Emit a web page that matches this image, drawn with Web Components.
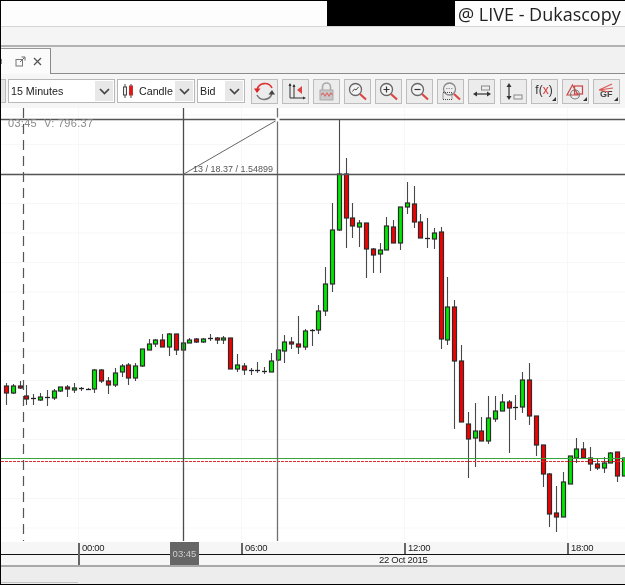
<!DOCTYPE html>
<html>
<head>
<meta charset="utf-8">
<title>Dukascopy chart</title>
<style>
  html, body { margin: 0; padding: 0; background: #fff; }
  body { width: 625px; height: 585px; overflow: hidden; font-family: "Liberation Sans", sans-serif; }
</style>
</head>
<body>
<trader-app>
  <title-bar slot="title">@ LIVE - Dukascopy</title-bar>
  <tab-strip slot="tabs"></tab-strip>
  <chart-toolbar slot="toolbar">
    <tool-select style="width:107px">15 Minutes</tool-select>
    <tool-select style="width:78px;margin-left:2px" candle>Candle</tool-select>
    <tool-select style="width:48px;margin-left:2px">Bid</tool-select>

    <tool-button style="margin-left:6px">
      <svg viewBox="0 0 27 25" width="27" height="25" fill="none">
        <path d="M6 11 A8 8 0 0 1 21 9" stroke="#d33" stroke-width="1.6"/>
        <path d="M3 9.500 L9.500 9.500 L6 14 Z" fill="#d22"/>
        <path d="M21 14 A8 8 0 0 1 6 16" stroke="#777" stroke-width="1.6"/>
        <path d="M17.500 15.500 L24 15.500 L21 11 Z" fill="#444"/>
      </svg>
    </tool-button>
    <tool-button>
      <svg viewBox="0 0 27 25" width="27" height="25" fill="none">
        <path d="M8 5V19H22M12 6V19" stroke="#333" stroke-width="1"/>
        <path d="M6.500 7L8 4L9.500 7ZM10.500 8L12 5L13.500 8ZM21 17.500L24 19L21 20.500Z" fill="#333"/>
        <path d="M20 7V15L15 11Z" fill="#d44"/>
      </svg>
    </tool-button>
    <tool-button>
      <svg viewBox="0 0 27 25" width="27" height="25" fill="none">
        <path d="M9.500 11V8A4 4 0 0 1 17.500 8V11" stroke="#aaa" stroke-width="1.6"/>
        <rect x="7" y="11" width="13" height="10" fill="#c8c8c8" stroke="#aaa"/>
        <path d="M8 16L10 14L12 17L14 14L16 17L18 14L19.500 16" stroke="#d66" stroke-width="1.1"/>
      </svg>
    </tool-button>
    <tool-button>
      <svg viewBox="0 0 27 25" width="27" height="25" fill="none">
        <circle cx="11.500" cy="10.500" r="6" fill="#f4f4f4" stroke="#666" stroke-width="1.3"/>
        <path d="M8.500 12.500L10.500 10L12 11L14.500 8" stroke="#444"/>
        <path d="M16 15L22 20.500" stroke="#d44" stroke-width="2.200"/>
      </svg>
    </tool-button>
    <tool-button>
      <svg viewBox="0 0 27 25" width="27" height="25" fill="none">
        <circle cx="11.500" cy="10.500" r="6" fill="#f4f4f4" stroke="#666" stroke-width="1.3"/>
        <path d="M8.500 10.500H14.500M11.500 7.500V13.500" stroke="#333" stroke-width="1.200"/>
        <path d="M16 15L22 20.500" stroke="#d44" stroke-width="2.200"/>
      </svg>
    </tool-button>
    <tool-button>
      <svg viewBox="0 0 27 25" width="27" height="25" fill="none">
        <circle cx="11.500" cy="10.500" r="6" fill="#f4f4f4" stroke="#666" stroke-width="1.3"/>
        <path d="M8.500 10.500H14.500" stroke="#333" stroke-width="1.200"/>
        <path d="M16 15L22 20.500" stroke="#d44" stroke-width="2.200"/>
      </svg>
    </tool-button>
    <tool-button>
      <svg viewBox="0 0 27 25" width="27" height="25" fill="none">
        <circle cx="12.500" cy="10" r="6" fill="#eee" stroke="#888" stroke-width="1.3"/>
        <path d="M9 9.500H16" stroke="#999" stroke-dasharray="1.500 1"/>
        <rect x="6" y="13.500" width="9" height="7" stroke="#444" stroke-dasharray="1 1"/>
        <path d="M17 15L23 20.500" stroke="#d44" stroke-width="2.200"/>
      </svg>
    </tool-button>
    <tool-button>
      <svg viewBox="0 0 27 25" width="27" height="25" fill="none">
        <rect x="13.500" y="7" width="8" height="4" fill="#eee" stroke="#888"/>
        <path d="M7 15H21" stroke="#333" stroke-width="1.200"/>
        <path d="M9 12.500V17.500L5 15ZM19 12.500V17.500L23 15Z" fill="#333"/>
      </svg>
    </tool-button>
    <tool-button style="margin-left:1px">
      <svg viewBox="0 0 27 25" width="27" height="25" fill="none">
        <rect x="14" y="16" width="8" height="4" fill="#eee" stroke="#888"/>
        <path d="M9 7V18" stroke="#333" stroke-width="1.200"/>
        <path d="M6.500 8H11.500L9 4ZM6.500 17H11.500L9 21Z" fill="#333"/>
      </svg>
    </tool-button>
    <tool-button>
      <svg viewBox="0 0 27 25" width="27" height="25" fill="none">
        <path d="M25 18V22H21Z" fill="#333"/>
      </svg>
      <span style="font:12px 'Liberation Sans',sans-serif;color:#333;margin:-4px 0 0 -1px;position:relative">f(<b style="color:#d33;font-weight:400">x</b>)</span>
    </tool-button>
    <tool-button>
      <svg viewBox="0 0 27 25" width="27" height="25" fill="none">
        <path d="M10.500 6L16 16H5Z" stroke="#c44" stroke-width="1.200"/>
        <rect x="12.500" y="7" width="8" height="8" stroke="#c44" stroke-width="1.200"/>
        <circle cx="13" cy="15.500" r="4.500" stroke="#777" stroke-width="1.100"/>
        <path d="M25 18V22H21Z" fill="#333"/>
      </svg>
    </tool-button>
    <tool-button>
      <span style="position:absolute;left:6px;bottom:4px;font:bold 9px 'Liberation Sans',sans-serif;color:#444">GF</span>
      <svg viewBox="0 0 27 25" width="27" height="25" fill="none">
        <path d="M6 11L19 5M6 11L20 9M6 11L16 13" stroke="#d55" stroke-width="1.100"/>
        <path d="M25 18V22H21Z" fill="#333"/>
      </svg>
    </tool-button>
  </chart-toolbar>
  <candle-chart slot="chart"></candle-chart>
  <time-axis slot="axis"></time-axis>
  <status-strip slot="status"></status-strip>
</trader-app>

<script>
class TraderApp extends HTMLElement {
  constructor() {
    super();
    const shadow = this.attachShadow({ mode: 'open' });
    shadow.innerHTML = `
      <style>
        :host {
          display: flex;
          flex-direction: column;
          box-sizing: border-box;
          width: 625px;
          height: 585px;
          overflow: hidden;
          border-left: 1px solid #000;
          border-top: 1px solid #000;
          border-bottom: 1px solid #000;
          filter: blur(.3px);
        }
      </style>
      <slot name="title"></slot>
      <slot name="tabs"></slot>
      <slot name="toolbar"></slot>
      <slot name="chart"></slot>
      <slot name="axis"></slot>
      <slot name="status"></slot>
    `;
  }
}

class TitleBar extends HTMLElement {
  constructor() {
    super();
    const shadow = this.attachShadow({ mode: 'open' });
    shadow.innerHTML = `
      <style>
        :host {
          display: flex;
          justify-content: flex-end;
          align-items: stretch;
          height: 25px;
          background: #fdfdfd;
          font-family: "Open Sans", sans-serif;
          font-size: 18px;
          color: #222;
        }
        .hidden { width: 128px; background: #000; }
        .name { display: flex; align-items: center; width: 170px; padding-left: 3px; box-sizing: border-box; white-space: nowrap; }
      </style>
      <div class="hidden"></div>
      <div class="name"><slot></slot></div>
    `;
  }
}

class TabStrip extends HTMLElement {
  constructor() {
    super();
    const shadow = this.attachShadow({ mode: 'open' });
    shadow.innerHTML = `
      <style>
        :host { display: block; }
        .menu {
          height: 18px;
          background: #f5f5f5;
          border-top: 1px solid #d6d6d6;
          border-bottom: 2px solid #b2b2b2;
        }
        .row {
          display: flex;
          height: 27px;
          box-sizing: border-box;
          background: #f1f1f1;
          border-bottom: 1px solid #8c8c8c;
          padding-top: 1px;
        }
        .tab {
          display: flex;
          align-items: center;
          gap: 7px;
          width: 50px;
          height: 26px;
          box-sizing: border-box;
          padding-left: 14px;
          background: #fbfbfb;
          border-top: 1px solid #999;
          border-right: 1px solid #888;
          position: relative;
        }
        .cut { position: absolute; left: 0; top: 10px; width: 1px; height: 5px; background: #888; }
        svg { display: block; }
      </style>
      <div class="menu"></div>
      <div class="row">
        <div class="tab">
          <div class="cut"></div>
          <svg width="11" height="11" viewBox="0 0 11 11" fill="none">
            <rect x="1" y="3.500" width="6.500" height="6.500" stroke="#777"/>
            <path d="M5 6L9.500 1.500M6.500 1H10V4.500" stroke="#666"/>
          </svg>
          <svg width="9" height="9" viewBox="0 0 9 9" fill="none">
            <path d="M1 1L8 8M8 1L1 8" stroke="#555" stroke-width="1.300"/>
          </svg>
        </div>
      </div>
    `;
  }
}

class ChartToolbar extends HTMLElement {
  constructor() {
    super();
    const shadow = this.attachShadow({ mode: 'open' });
    shadow.innerHTML = `
      <style>
        :host {
          display: flex;
          align-items: flex-start;
          gap: 4px;
          height: 34px;
          box-sizing: border-box;
          padding: 5px 0 0 7px;
          background: #f6f6f6;
          position: relative;
        }
        .edge {
          width: 4px;
          height: 22px;
          margin-left: -7px;
          margin-right: -2px;
          background: #e4e4e4;
          border: 1px solid #bbb;
          border-left: 0;
        }
        ::slotted(tool-select) { margin-right: -4px; }
      </style>
      <div class="edge"></div>
      <slot></slot>
    `;
  }
}

class ToolSelect extends HTMLElement {
  constructor() {
    super();
    const shadow = this.attachShadow({ mode: 'open' });
    const icon = this.hasAttribute('candle') ? `
      <svg width="14" height="16" viewBox="0 0 14 16" fill="none" style="margin:0 3px 0 2px;flex:none">
        <path d="M3 1V15" stroke="#444"/><rect x="1.500" y="4" width="3" height="8" fill="#eee" stroke="#444"/>
        <path d="M9 1V15" stroke="#444"/><rect x="7.500" y="3" width="3" height="9" fill="#e11" stroke="#b33"/>
      </svg>` : '';
    shadow.innerHTML = `
      <style>
        :host {
          display: flex;
          height: 24px;
          box-sizing: border-box;
          border: 1px solid #b8b8b8;
          background: #fff;
          padding: 1px;
          font: 10.700px "Liberation Sans", sans-serif;
          color: #222;
        }
        .value {
          flex: 1;
          display: flex;
          align-items: center;
          padding-left: 1px;
          overflow: hidden;
          white-space: nowrap;
        }
        .arrow {
          flex: none;
          width: 18px;
          display: flex;
          align-items: center;
          justify-content: center;
          background: #e8e8e8;
        }
      </style>
      <div class="value">${icon}<slot></slot></div>
      <div class="arrow">
        <svg width="11" height="7" viewBox="0 0 11 7" fill="none"><path d="M1 1L5.500 5.500L10 1" stroke="#444" stroke-width="1.700"/></svg>
      </div>
    `;
  }
}

class ToolButton extends HTMLElement {
  constructor() {
    super();
    const shadow = this.attachShadow({ mode: 'open' });
    shadow.innerHTML = `
      <style>
        :host {
          display: flex;
          position: relative;
          align-items: center;
          justify-content: center;
          box-sizing: border-box;
          width: 27px;
          height: 25px;
          background: #ececec;
          border: 1px solid #bdbdbd;
          overflow: hidden;
        }
        ::slotted(svg) { position: absolute; left: -1px; top: -1px; }
      </style>
      <slot></slot>
    `;
  }
}

// wick top, body top, body bottom, wick bottom, colour (r, g, or k for a flat bar)
const CANDLES = [
  [383,386,393,405,'r'],[384,386,393,394,'g'],[381,386,388,389,'r'],[385,396,399,405,'r'],
  [394,398,399,405,'k'],[393,397,400,401,'g'],[390,397,398,406,'k'],[389,391,398,400,'g'],
  [387,387,391,392,'g'],[385,387,389,397,'r'],[383,388,390,393,'g'],[387,388,389,391,'k'],
  [388,389,389,390,'k'],[369,370,389,393,'g'],[369,370,381,383,'r'],[377,381,385,394,'r'],
  [368,373,385,387,'g'],[364,366,372,377,'g'],[363,365,378,385,'r'],[363,366,378,381,'g'],
  [349,349,366,367,'g'],[339,344,350,350,'g'],[339,340,344,347,'g'],[334,340,347,347,'r'],
  [333,334,347,356,'g'],[334,334,350,355,'r'],[342,343,350,359,'g'],[338,340,343,343,'g'],
  [338,339,342,343,'r'],[338,339,342,343,'g'],[334,338,339,341,'k'],[337,338,340,344,'r'],
  [336,338,340,344,'g'],[338,338,369,369,'r'],[354,365,369,372,'g'],[363,366,370,375,'r'],
  [368,370,371,375,'k'],[362,370,371,373,'k'],[367,371,372,374,'k'],[353,361,372,372,'g'],
  [350,350,360,361,'g'],[335,342,351,363,'g'],[337,342,344,349,'r'],[316,344,347,354,'r'],
  [329,331,347,350,'g'],[329,330,331,346,'k'],[305,311,330,334,'g'],[267,284,311,316,'g'],
  [203,230,284,292,'g'],[120,174,230,231,'g'],[158,174,218,248,'r'],[203,218,226,238,'r'],
  [220,223,227,247,'g'],[223,223,249,278,'r'],[248,249,255,273,'r'],[243,250,254,273,'g'],
  [217,226,250,250,'g'],[220,227,243,243,'r'],[207,207,243,250,'g'],[182,203,207,214,'g'],
  [186,204,222,228,'r'],[214,222,238,238,'r'],[218,238,238,248,'k'],[228,233,239,249,'g'],
  [227,232,339,349,'r'],[277,307,340,345,'g'],[300,307,361,429,'r'],[345,361,422,422,'r'],
  [412,424,439,478,'r'],[403,431,438,467,'g'],[417,431,441,441,'r'],[396,418,441,444,'g'],
  [396,411,419,422,'g'],[394,402,411,411,'g'],[400,402,408,453,'r'],[395,407,408,420,'k'],
  [372,380,407,413,'g'],[363,380,416,425,'r'],[416,416,445,456,'r'],[445,445,474,487,'r'],
  [473,474,514,527,'r'],[486,513,517,532,'r'],[472,482,517,517,'g'],[456,456,484,484,'g'],
  [438,449,458,463,'g'],[442,449,458,458,'r'],[447,458,464,471,'r'],[459,464,468,470,'r'],
  [457,463,468,473,'g'],[452,453,463,463,'g'],[452,452,476,482,'r'],[458,458,476,476,'g']
];

class CandleChart extends HTMLElement {
  constructor() {
    super();
    const shadow = this.attachShadow({ mode: 'open' });

    let grid = '';
    for (let y = 115; y < 540; y += 29.5) grid += `<path d="M1 ${y}H625" stroke="#f7f7f7"/>`;
    for (const x of [78.5, 241.5, 404.5, 567.5]) grid += `<path d="M${x} 108V541" stroke="#f7f7f7"/>`;

    let candles = '';
    CANDLES.forEach((c, i) => {
      const x = 6.1 + i * 6.79;
      const cx = Math.round(x) + 0.5;
      candles += `<path d="M${cx} ${c[0]}V${c[3]}" stroke="#484848" stroke-width="1.100"/>`;
      if (c[4] === 'k') {
        candles += `<path d="M${cx - 2.5} ${c[1] + .5}H${cx + 2.5}" stroke="#222" stroke-width="1.300"/>`;
      } else {
        const fill = c[4] === 'r' ? '#f40000' : '#00e800';
        candles += `<rect x="${cx - 2}" y="${c[1]}" width="4" height="${c[2] - c[1]}" fill="${fill}" stroke="#2c2c2c" stroke-width="1.200"/>`;
      }
    });

    shadow.innerHTML = `
      <style>
        :host { display: block; height: 434px; background: #fff; }
        svg { display: block; }
        text { font-family: "Liberation Sans", sans-serif; }
      </style>
      <svg width="624" height="434" viewBox="1 108 624 434">
        ${grid}
        ${candles}
        <path d="M1 458.500H625" stroke="#3aa53a" stroke-width="1"/>
        <path d="M1 461.500H625" stroke="#d83030" stroke-width="1" stroke-dasharray="3 1"/>
        <path d="M23.500 108V541" stroke="#555" stroke-width="1.200" stroke-dasharray="10 6"/>
        <path d="M183.500 108V541" stroke="#4c4c4c" stroke-width="1.300"/>
        <path d="M277.500 108V541" stroke="#707070" stroke-width="1.300"/>
        <path d="M1 119.500H625M1 174.500H625" stroke="#555" stroke-width="1.300"/>
        <path d="M183 174.500L278 119.500" stroke="#666"/>
        <rect x="275.500" y="117.500" width="4" height="4" fill="#fff"/>
        <text y="127" font-size="11" fill="#8a8a8a" letter-spacing=".3"><tspan x="8">03:45</tspan><tspan x="44">V: 796.37</tspan></text>
        <text x="193" y="172" font-size="9" fill="#555">13 / 18.37 / 1.54899</text>
      </svg>
    `;
  }
}

class TimeAxis extends HTMLElement {
  constructor() {
    super();
    const shadow = this.attachShadow({ mode: 'open' });
    const ticks = [[77, '00:00'], [240, '06:00'], [403, '12:00'], [566, '18:00']];
    shadow.innerHTML = `
      <style>
        :host {
          display: block;
          position: relative;
          height: 23px;
          box-sizing: border-box;
          background: #f6f6f6;
          font: 9.500px "Liberation Sans", sans-serif;
          color: #222;
        }
        .rule { position: absolute; left: 0; right: 0; top: 12px; height: 1px; background: #111; }
        .tick { position: absolute; top: 1px; height: 11px; width: 1.500px; background: #666; }
        .tick.long { height: 22px; }
        .label { position: absolute; top: 0; line-height: 12px; letter-spacing: -.3px; }
        .date { position: absolute; left: 378px; top: 13px; line-height: 10px; letter-spacing: -.3px; }
        .cursor {
          position: absolute;
          left: 169px;
          top: 0;
          width: 29px;
          height: 23px;
          background: #666;
          color: #cfcfcf;
          display: flex;
          align-items: center;
          justify-content: center;
        }
      </style>
      <div class="rule"></div>
      ${ticks.map(([x, t], i) => `
        <div class="tick${i === 0 ? ' long' : ''}" style="left:${x}px"></div>
        <div class="label" style="left:${x + 4}px">${t}</div>`).join('')}
      <div class="date">22 Oct 2015</div>
      <div class="cursor">03:45</div>
    `;
  }
}

class StatusStrip extends HTMLElement {
  constructor() {
    super();
    const shadow = this.attachShadow({ mode: 'open' });
    shadow.innerHTML = `
      <style>
        :host {
          display: block;
          flex: 1;
          background: #ededed;
          border-top: 2px solid #a8a8a8;
          position: relative;
        }
        .grip { position: absolute; left: 0; bottom: 1px; width: 77px; height: 1px; background: #c4c4c4; }
      </style>
      <div class="grip"></div>
    `;
  }
}

customElements.define('trader-app', TraderApp);
customElements.define('title-bar', TitleBar);
customElements.define('tab-strip', TabStrip);
customElements.define('chart-toolbar', ChartToolbar);
customElements.define('tool-select', ToolSelect);
customElements.define('tool-button', ToolButton);
customElements.define('candle-chart', CandleChart);
customElements.define('time-axis', TimeAxis);
customElements.define('status-strip', StatusStrip);
</script>
</body>
</html>
